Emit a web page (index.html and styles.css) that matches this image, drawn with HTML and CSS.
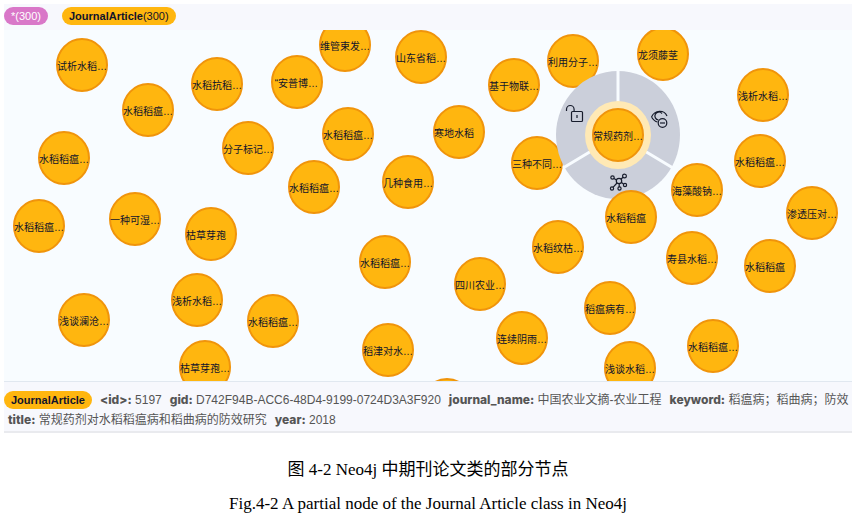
FILE: index.html
```html
<!DOCTYPE html>
<html lang="zh">
<head>
<meta charset="utf-8">
<title>Neo4j JournalArticle</title>
<link rel="stylesheet" href="styles.css">
</head>
<body>
<figure class="figure">
  <section class="browser">
    <header class="labels">
      <button class="pill pill-all" type="button">*(300)</button>
      <button class="pill" type="button"><b>JournalArticle</b>(300)</button>
    </header>
    <svg class="graph" id="graph" viewBox="4 30 848 351" role="img" aria-label="JournalArticle nodes">
      <g id="nodes-back"></g>
      <g class="menu">
        <ellipse class="wheel" cx="618" cy="135" rx="62" ry="64"/>
        <path class="split" d="M618 135V70M618 135L563 168M618 135L673 168"/>
        <ellipse class="halo" cx="618" cy="135" rx="33" ry="34"/>
        <g class="icon">
          <rect x="571.500" y="111.500" width="11" height="10" rx="1"/>
          <path d="M566.500 111V109.500a3.800 4 0 0 1 7.600 0V111.500M577 115v3"/>
        </g>
        <g class="icon">
          <path d="M651.500 117C655 109.500 664 109.500 667 116M651.500 117c1.500 2.500 3.500 4.500 6 5M662 113.500a4 4 0 1 0-3.500 6.500"/>
          <circle cx="662.500" cy="123" r="4.300"/>
          <path d="M660 123h5"/>
        </g>
        <g class="icon">
          <circle cx="619" cy="181" r="2.700"/>
          <circle cx="612.500" cy="177.500" r="1.700"/>
          <circle cx="624.500" cy="176" r="1.900"/>
          <circle cx="625" cy="185" r="1.600"/>
          <circle cx="619.500" cy="188.500" r="1.600"/>
          <circle cx="612" cy="188.500" r="1.600"/>
          <path d="M614 178.500l2.500 1.500M621 179l2.200-1.700M621.500 182.500l2 1.500M619.200 184v3M617 183l-4 4.300"/>
        </g>
      </g>
      <g id="nodes-front"></g>
    </svg>
    <footer class="details">
      <div class="row">
        <button class="pill pill-tag" type="button"><b>JournalArticle</b></button>
        <span><b class="key">&lt;id&gt;:</b> 5197</span>
        <span><b class="key">gid:</b> D742F94B-ACC6-48D4-9199-0724D3A3F920</span>
        <span><b class="key">journal_name:</b> 中国农业文摘-农业工程</span>
        <span><b class="key">keyword:</b> 稻瘟病；稻曲病；防效</span>
      </div>
      <div class="row row-next">
        <span><b class="key">title:</b> 常规药剂对水稻稻瘟病和稻曲病的防效研究</span>
        <span><b class="key">year:</b> 2018</span>
      </div>
    </footer>
  </section>
  <figcaption class="caption">
    <p>图 4-2 Neo4j 中期刊论文类的部分节点</p>
    <p>Fig.4-2 A partial node of the Journal Article class in Neo4j</p>
  </figcaption>
</figure>
<script src="graph.js"></script>
</body>
</html>
```
FILE: styles.css
```css
body {
  margin: 0;
  background: #fff;
  font-family: "Liberation Sans", "Noto Sans CJK SC", sans-serif;
}

.figure {
  margin: 4px 2px 0 4px;
}

.browser {
  background: #f7f8fd;
  border-bottom: 2px solid #e9eaee;
}

.labels {
  display: flex;
  gap: 14px;
  padding: 3px 0 5px;
}

.pill {
  height: 18px;
  padding: 0 7px;
  border: 0;
  border-radius: 9px;
  background: #ffb60f;
  color: #10132b;
  font: 11px/18px "Liberation Sans", sans-serif;
  white-space: nowrap;
}

.pill-all {
  background: #d977c8;
  color: #fff;
}

.graph {
  display: block;
  width: 100%;
  background: #f8fcff;
}

.node ellipse {
  fill: #ffb60f;
  stroke: #f0940b;
  stroke-width: 2;
}

.node text {
  fill: #10132b;
  font: 10px "Liberation Sans", "Noto Sans CJK SC", sans-serif;
}

.wheel {
  fill: #cbcfda;
}

.split {
  fill: none;
  stroke: #f8fcff;
  stroke-width: 3;
}

.halo {
  fill: #ffe9b5;
}

.icon {
  fill: none;
  stroke: #171c2c;
  stroke-width: 1.2;
}

.details {
  padding: 8px 0 1px;
  border-top: 1px solid #e1e8f0;
  color: #555;
  font-size: 12px;
  line-height: 20px;
  white-space: nowrap;
  overflow: hidden;
}

.row {
  display: flex;
  align-items: center;
  gap: 8px;
}

.row-next {
  padding-left: 4px;
}

.key {
  font: 800 12px/20px Inter, sans-serif;
}

.caption {
  color: #000;
  font: 17px/34px "Liberation Serif", "Noto Sans CJK SC", serif;
  text-align: center;
  padding-top: 20px;
}

.caption p {
  margin: 0;
}
```
FILE: graph.js
```js
const back = [
  [82, 65, "试析水稻…"], [148, 110, "水稻稻瘟…"], [217, 84, "水稻抗稻…"],
  [297, 82, "\u00a0“安普博…"], [345, 45, "维管束发…"], [421, 57, "山东省稻…"],
  [514, 85, "基于物联…"], [573, 61, "利用分子…"], [663, 54, "龙须藤茎"],
  [763, 95, "浅析水稻…"], [64, 158, "水稻稻瘟…"], [248, 148, "分子标记…"],
  [348, 134, "水稻稻瘟…"], [459, 132, "寒地水稻"], [537, 163, "三种不同…"],
  [760, 161, "水稻稻瘟…"], [697, 190, "海藻酸钠…"], [812, 213, "渗透压对…"],
  [408, 182, "几种食用…"], [314, 187, "水稻稻瘟…"], [39, 226, "水稻稻瘟…"],
  [135, 219, "一种可湿…"], [211, 234, "枯草芽孢"], [385, 262, "水稻稻瘟…"],
  [558, 247, "水稻纹枯…"], [692, 258, "寿县水稻…"], [770, 266, "水稻稻瘟"],
  [480, 284, "四川农业…"], [197, 300, "浅析水稻…"], [84, 320, "浅谈澜沧…"],
  [273, 321, "水稻稻瘟…"], [610, 308, "稻瘟病有…"], [522, 338, "连续阴雨…"],
  [713, 346, "水稻稻瘟…"], [388, 350, "稻津对水…"], [205, 367, "枯草芽孢…"],
  [630, 368, "浅谈水稻…"], [447, 405, ""]
];
const front = [[618, 135, "常规药剂…"], [631, 217, "水稻稻瘟"]];

function draw(id, nodes) {
  document.getElementById(id).innerHTML = nodes.map(([x, y, label]) =>
    `<g class="node"><ellipse cx="${x}" cy="${y}" rx="25" ry="26"/>` +
    (label ? `<text x="${x - 25}" y="${y + 5}">${label}</text>` : "") + "</g>"
  ).join("");
}

draw("nodes-back", back);
draw("nodes-front", front);
```
